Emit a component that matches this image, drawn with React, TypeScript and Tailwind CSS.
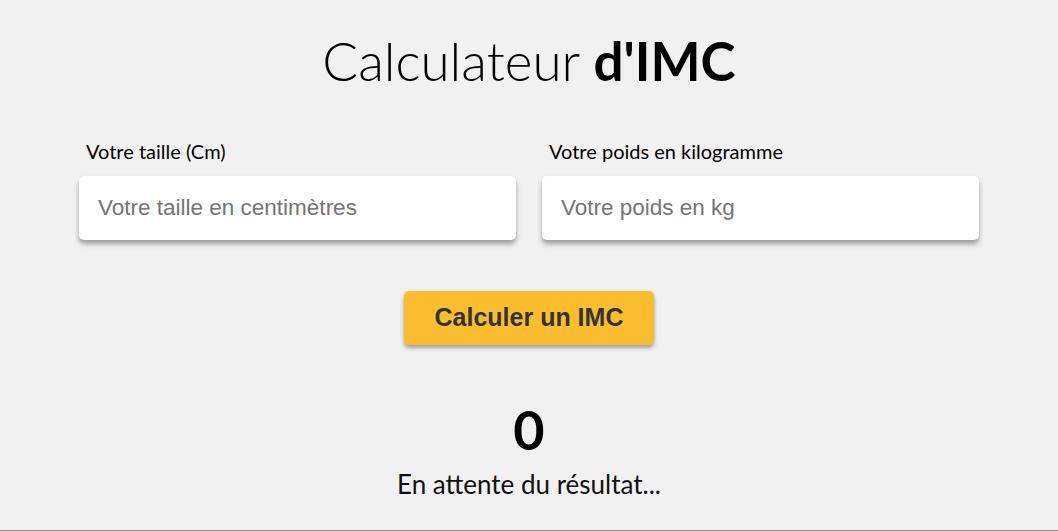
export default function App() {
  return (
    <div className="h-[531px] bg-[#f1f1f1] border-b border-[#8c8c8c] flex flex-col items-center overflow-hidden font-['Lato',sans-serif]">
      <h1 className="mt-[28px] text-[53px] leading-[66px] text-black font-light">
        Calculateur <span className="font-bold">d'IMC</span>
      </h1>

      <div className="mt-[45px] w-[900px] grid grid-cols-2 gap-[26px]">
        <Field label="Votre taille (Cm)" placeholder="Votre taille en centimètres" />
        <Field label="Votre poids en kilogramme" placeholder="Votre poids en kg" />
      </div>

      <button className="mt-[51px] w-[250px] h-[54px] rounded-[5px] bg-[#fbbd30] text-[#333] text-[25px] font-bold font-['Liberation_Sans',Arial,sans-serif] shadow-[0_3px_4px_rgba(0,0,0,0.35)]">
        Calculer un IMC
      </button>

      <div className="mt-[53px] text-[54px] leading-[64px] font-bold text-black">0</div>
      <p className="mt-[7px] text-[26px] leading-[30px] text-[#111]">En attente du résultat...</p>
    </div>
  );
}

function Field({ label, placeholder }: { label: string; placeholder: string }) {
  return (
    <div className="flex flex-col">
      <label className="pl-[7px] text-[20px] leading-[24px] text-black">{label}</label>
      <input
        placeholder={placeholder}
        className="mt-[13px] h-[64px] rounded-[5px] bg-white px-[19px] text-[22.5px] font-['Liberation_Sans',Arial,sans-serif] placeholder:text-[#757575] outline-none shadow-[0_4px_5px_rgba(0,0,0,0.35)]"
      />
    </div>
  );
}
